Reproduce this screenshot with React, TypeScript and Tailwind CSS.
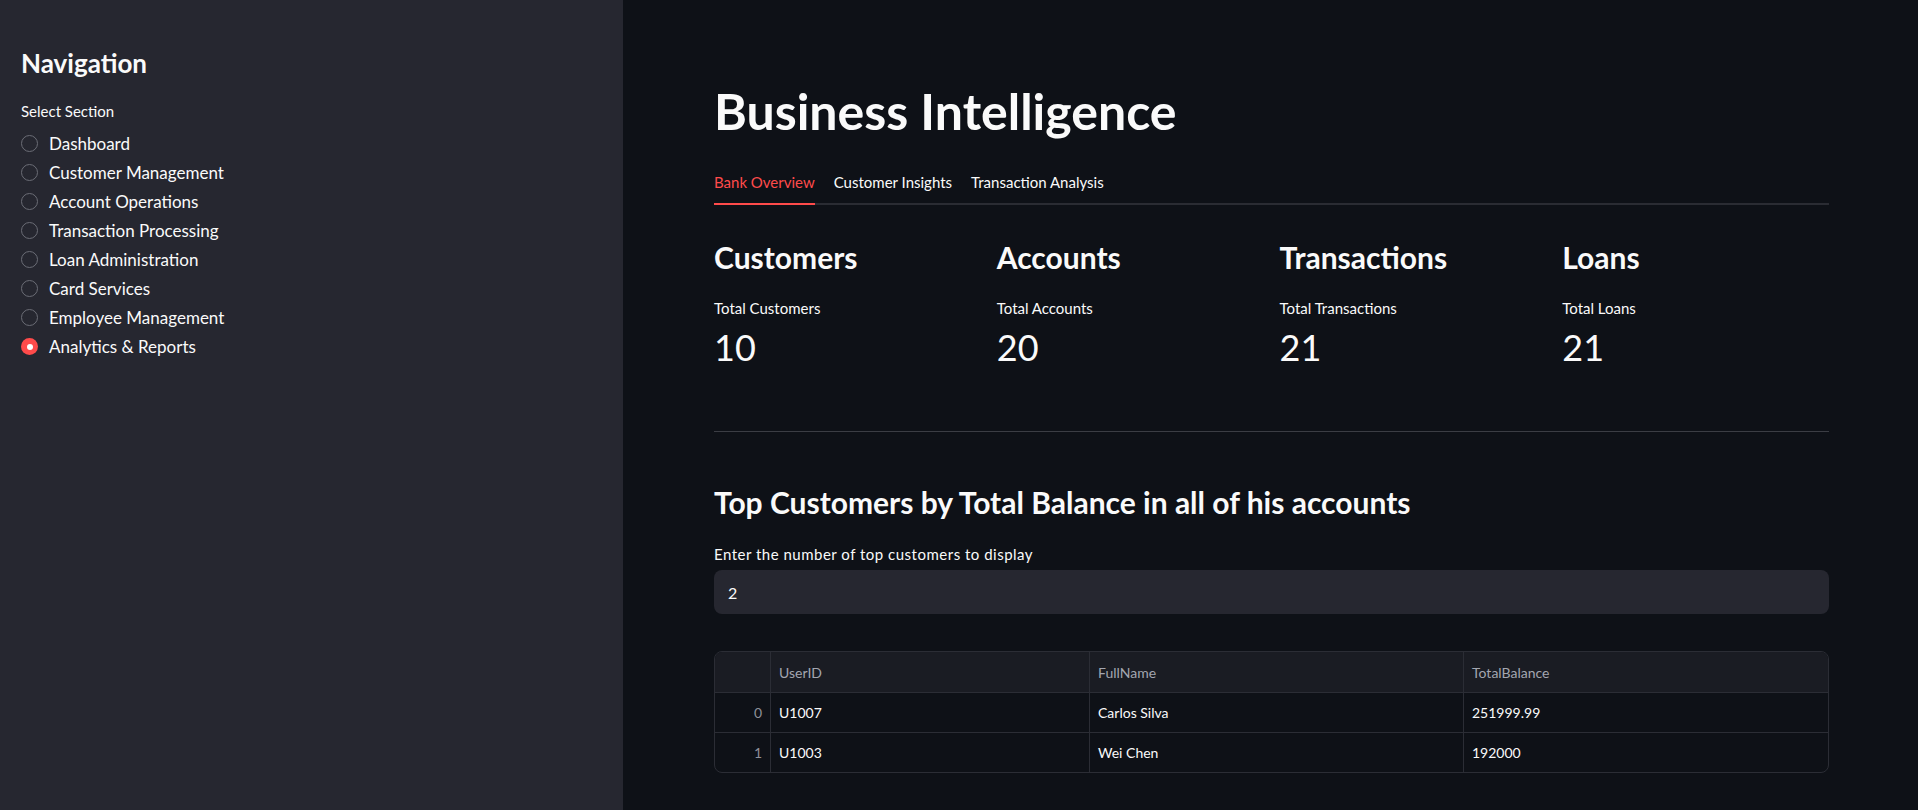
import React, { useState } from 'react';

const sections = [
  'Dashboard',
  'Customer Management',
  'Account Operations',
  'Transaction Processing',
  'Loan Administration',
  'Card Services',
  'Employee Management',
  'Analytics & Reports',
];

const metrics = [
  { title: 'Customers', label: 'Total Customers', value: 10 },
  { title: 'Accounts', label: 'Total Accounts', value: 20 },
  { title: 'Transactions', label: 'Total Transactions', value: 21 },
  { title: 'Loans', label: 'Total Loans', value: 21 },
];

const rows = [
  { id: 'U1007', name: 'Carlos Silva', balance: '251999.99' },
  { id: 'U1003', name: 'Wei Chen', balance: '192000' },
];

const tabs = ['Bank Overview', 'Customer Insights', 'Transaction Analysis'];

const App = () => {
  const [section, setSection] = useState('Analytics & Reports');
  const [tab, setTab] = useState(0);
  const [topN, setTopN] = useState('2');

  return (
    <div
      className="flex min-h-screen w-full bg-[#0e1117] text-[#fafafa]"
      style={{ fontFamily: 'Lato, "Noto Sans", sans-serif' }}
    >
      {/* Sidebar */}
      <aside className="w-[623px] shrink-0 bg-[#262730] pl-[21px] pt-[47px] min-h-screen">
        <h2 className="h-[32px] flex items-center text-[26px] font-bold">Navigation</h2>
        <p className="mt-[22px] h-[20px] flex items-center text-[15px]">Select Section</p>
        <div className="mt-[8px]">
          {sections.map((s) => {
            const active = s === section;
            return (
              <button
                key={s}
                onClick={() => setSection(s)}
                className="flex h-[29px] items-center gap-[11px] text-left text-[17px]"
              >
                {active ? (
                  <span className="flex h-[17px] w-[17px] items-center justify-center rounded-full bg-[#ff4b4b]">
                    <span className="h-[6px] w-[6px] rounded-full bg-white" />
                  </span>
                ) : (
                  <span className="h-[17px] w-[17px] rounded-full border border-[#6b6d76]" />
                )}
                <span>{s}</span>
              </button>
            );
          })}
        </div>
      </aside>

      {/* Main */}
      <main className="flex-1 pl-[91px] pr-[89px] pt-[81px]">
        <h1 className="h-[60px] flex items-center text-[50px] font-bold">Business Intelligence</h1>

        <div className="mt-[20px] flex gap-[19px] border-b-2 border-[#2a2c33]">
          {tabs.map((t, i) => (
            <button
              key={t}
              onClick={() => setTab(i)}
              className={`-mb-[2px] h-[44px] flex items-center border-b-2 text-[15px] ${
                tab === i ? 'border-[#ff4b4b] text-[#ff4b4b]' : 'border-transparent text-[#fafafa]'
              }`}
            >
              {t}
            </button>
          ))}
        </div>

        <div className="mt-[32px] grid grid-cols-4 gap-4">
          {metrics.map((m) => (
            <div key={m.title}>
              <h3 className="h-[40px] flex items-center text-[30px] font-bold">{m.title}</h3>
              <p className="mt-[21px] h-[20px] flex items-center text-[15px]">{m.label}</p>
              <p className="mt-[7px] h-[44px] flex items-center text-[36px] font-normal">{m.value}</p>
            </div>
          ))}
        </div>

        <hr className="mt-[62px] border-0 border-t border-[#3b3d44]" />

        <h3 className="mt-[50px] h-[40px] flex items-center text-[30px] font-bold">
          Top Customers by Total Balance in all of his accounts
        </h3>
        <p className="mt-[22px] h-[20px] flex items-center text-[15px] tracking-[0.5px]">
          Enter the number of top customers to display
        </p>
        <input
          value={topN}
          onChange={(e) => setTopN(e.target.value)}
          className="mt-[6px] h-[44px] w-full rounded-lg bg-[#262730] px-[14px] text-[16px] text-[#fafafa] outline-none"
        />

        <div className="mt-[37px] overflow-hidden rounded-lg border border-[#2b2d35] text-[14px]">
          <div className="grid h-[40px] grid-cols-[56px_319px_374px_1fr] bg-[#1a1c23] text-[#a3a6b0]">
            <div className="border-r border-[#2b2d35]" />
            <div className="flex items-center border-r border-[#2b2d35] px-[8px]">UserID</div>
            <div className="flex items-center border-r border-[#2b2d35] px-[8px]">FullName</div>
            <div className="flex items-center px-[8px]">TotalBalance</div>
          </div>
          {rows.map((r, i) => (
            <div key={r.id} className="grid h-[40px] grid-cols-[56px_319px_374px_1fr] border-t border-[#2b2d35]">
              <div className="flex items-center justify-end border-r border-[#2b2d35] px-[8px] text-[#8e9099]">{i}</div>
              <div className="flex items-center border-r border-[#2b2d35] px-[8px]">{r.id}</div>
              <div className="flex items-center border-r border-[#2b2d35] px-[8px]">{r.name}</div>
              <div className="flex items-center px-[8px]">{r.balance}</div>
            </div>
          ))}
        </div>
      </main>
    </div>
  );
};

export default App;
